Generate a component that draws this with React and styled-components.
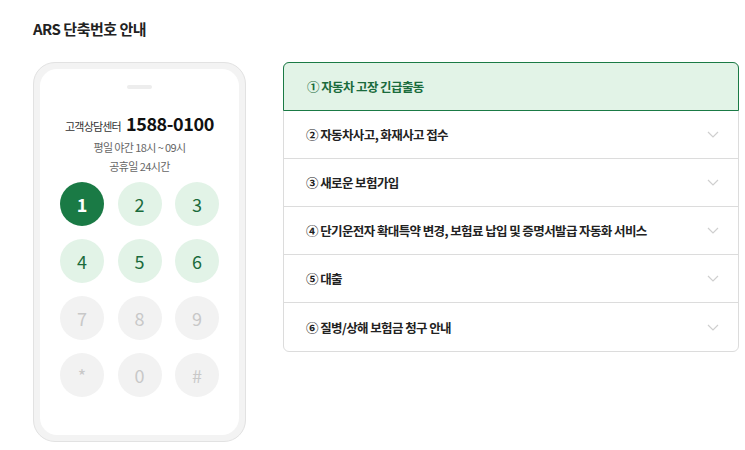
import React from 'react';
import styled, { createGlobalStyle } from 'styled-components';

const GlobalStyle = createGlobalStyle`
  body {
    margin: 0;
    background: #fff;
    font-family: 'Noto Sans CJK KR', 'Noto Sans', sans-serif;
    color: #222;
  }
`;

const Page = styled.div`
  padding: 20px 6px 0 33px;
`;

const Title = styled.h2`
  margin: 0 0 24px;
  font-size: 15px;
  line-height: 18px;
  font-weight: 700;
  color: #222;
  letter-spacing: -0.5px;
`;

const Row = styled.div`
  display: flex;
  align-items: flex-start;
  gap: 37px;
`;

const Phone = styled.div`
  width: 213px;
  height: 380px;
  box-sizing: border-box;
  padding: 6px;
  border: 1px solid #e2e2e2;
  border-radius: 22px;
  background: #f3f3f3;
  flex-shrink: 0;
`;

const Screen = styled.div`
  height: 100%;
  box-sizing: border-box;
  border-radius: 17px;
  background: #fff;
  padding-top: 16px;
  display: flex;
  flex-direction: column;
  align-items: center;
`;

const Notch = styled.div`
  width: 25px;
  height: 4px;
  border-radius: 2px;
  background: #ededed;
  margin-bottom: 22px;
`;

const CenterLine = styled.div`
  display: flex;
  align-items: baseline;
  gap: 5px;
  line-height: 24px;
`;

const CenterLabel = styled.span`
  font-size: 11px;
  color: #333;
  letter-spacing: -0.8px;
`;

const CenterNumber = styled.span`
  font-size: 18px;
  font-weight: 700;
  color: #111;
  letter-spacing: -0.4px;
`;

const Hours = styled.div`
  font-size: 11px;
  line-height: 19px;
  color: #666;
  letter-spacing: -0.6px;
`;

const Keypad = styled.div`
  margin-top: 6px;
  display: grid;
  grid-template-columns: repeat(3, 44px);
  gap: 13px 13.5px;
`;

const tones = {
  active: { bg: '#1a7a45', fg: '#fff', weight: 700 },
  on: { bg: '#e2f3e7', fg: '#1a6b3c', weight: 400 },
  off: { bg: '#f2f2f2', fg: '#c8c8c8', weight: 400 },
};

const Key = styled.div`
  width: 44px;
  height: 44px;
  border-radius: 50%;
  display: flex;
  align-items: center;
  justify-content: center;
  font-size: 18px;
  background: ${(p) => tones[p.$tone].bg};
  color: ${(p) => tones[p.$tone].fg};
  font-weight: ${(p) => tones[p.$tone].weight};
`;

const List = styled.div`
  width: 456px;
  box-sizing: border-box;
  border: 1px solid #dcdcdc;
  border-radius: 6px;
`;

const Item = styled.div`
  height: 48px;
  box-sizing: border-box;
  display: flex;
  align-items: center;
  justify-content: space-between;
  padding: 0 19px 0 22px;
  border-bottom: 1px solid #dcdcdc;
  font-size: 12.5px;
  font-weight: 700;
  letter-spacing: -0.6px;
  color: #222;

  &:last-child {
    border-bottom: none;
  }

  ${(p) =>
    p.$open &&
    `
    margin: -1px -1px 0;
    height: 49px;
    padding-left: 23px;
    border: 1px solid #1a7a45;
    border-radius: 6px 6px 0 0;
    background: #e2f3e7;
    color: #1a6b3c;
  `}
`;

const Chevron = () => (
  <svg width="12" height="7" viewBox="0 0 12 7">
    <polyline points="1,1 6,6 11,1" fill="none" stroke="#cfcfcf" strokeWidth="1.2" />
  </svg>
);

const keys = [
  ['1', 'active'], ['2', 'on'], ['3', 'on'],
  ['4', 'on'], ['5', 'on'], ['6', 'on'],
  ['7', 'off'], ['8', 'off'], ['9', 'off'],
  ['*', 'off'], ['0', 'off'], ['#', 'off'],
];

const menu = [
  '① 자동차 고장 긴급출동',
  '② 자동차사고, 화재사고 접수',
  '③ 새로운 보험가입',
  '④ 단기운전자 확대특약 변경, 보험료 납입 및 증명서발급 자동화 서비스',
  '⑤ 대출',
  '⑥ 질병/상해 보험금 청구 안내',
];

const App = () => (
  <Page>
    <GlobalStyle />
    <Title>ARS 단축번호 안내</Title>
    <Row>
      <Phone>
        <Screen>
          <Notch />
          <CenterLine>
            <CenterLabel>고객상담센터</CenterLabel>
            <CenterNumber>1588-0100</CenterNumber>
          </CenterLine>
          <Hours>평일 야간 18시 ~ 09시</Hours>
          <Hours>공휴일 24시간</Hours>
          <Keypad>
            {keys.map(([k, tone]) => (
              <Key key={k} $tone={tone}>{k}</Key>
            ))}
          </Keypad>
        </Screen>
      </Phone>
      <List>
        {menu.map((label, i) => (
          <Item key={label} $open={i === 0}>
            <span>{label}</span>
            {i !== 0 && <Chevron />}
          </Item>
        ))}
      </List>
    </Row>
  </Page>
);

export default App;
